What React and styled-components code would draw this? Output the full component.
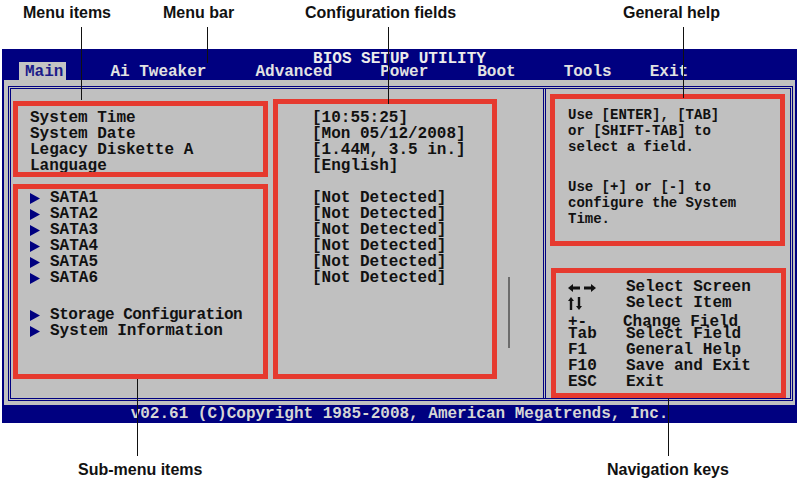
import React from "react";
import styled, { createGlobalStyle } from "styled-components";

const GlobalStyle = createGlobalStyle`
  body {
    margin: 0;
    background: #ffffff;
  }
`;

const Page = styled.div`
  position: relative;
  width: 797px;
  height: 483px;
  overflow: hidden;
  background: #ffffff;
`;

const TopLabels = styled.div`
  display: grid;
  grid-template-columns: 140px 142px 318px 1fr;
  height: 49px;
  box-sizing: border-box;
  padding: 3px 0 0 23px;
`;

const BottomLabels = styled.div`
  display: grid;
  grid-template-columns: 529px 1fr;
  height: 60px;
  box-sizing: border-box;
  padding: 37px 0 0 78px;
`;

const Callout = styled.div`
  font-family: "Liberation Sans", Arial, sans-serif;
  font-weight: 700;
  font-size: 16px;
  line-height: 20px;
  color: #111;
  white-space: nowrap;
`;

const Leader = styled.div`
  position: absolute;
  left: ${(p) => p.$x}px;
  top: ${(p) => p.$y}px;
  width: 1px;
  height: ${(p) => p.$h}px;
  background: #111;
  z-index: 3;
`;

const Bios = styled.div`
  margin-left: 2px;
  width: 795px;
  background: #000080;
  font-family: "Liberation Mono", "Courier New", monospace;
  font-weight: 700;
  font-size: 16px;
`;

const Header = styled.div`
  height: 31px;
  display: flex;
  flex-direction: column;
`;

const Title = styled.div`
  height: 13px;
  line-height: 21px;
  text-align: center;
  color: #ececec;
  white-space: pre;
`;

const MenuBar = styled.div`
  display: flex;
  height: 18px;
`;

const MenuItem = styled.div`
  margin-left: ${(p) => p.$ml}px;
  height: 18px;
  line-height: 21px;
  white-space: pre;
  color: ${(p) => (p.$active ? "#1c1c8a" : "#e2e2e2")};
  background: ${(p) => (p.$active ? "#c4c4c4" : "transparent")};
  padding: ${(p) => (p.$active ? "0 3px 0 6px" : "0")};
`;

const Body = styled.div`
  margin: 0 2px;
  height: 325px;
  box-sizing: border-box;
  background: #c0c0c0;
  padding: 6px 2px 4px 4px;
`;

const Frame = styled.div`
  height: 100%;
  box-sizing: border-box;
  border: 3px double #000080;
  display: grid;
  grid-template-columns: 532px 1fr;
`;

const LeftPane = styled.div`
  display: flex;
  padding: 10px 0 0 2px;
`;

const GroupColumn = styled.div`
  display: flex;
  flex-direction: column;
  width: 255px;
  padding-top: 2px;
`;

const Marked = styled.div`
  position: relative;
  box-sizing: border-box;
  width: ${(p) => p.$w}px;
  height: ${(p) => p.$h}px;
  margin: ${(p) => p.$m || "0"};
  padding: ${(p) => p.$pad};
  color: #111;

  &::after {
    content: "";
    position: absolute;
    inset: 0;
    border: 5px solid #e63a2f;
    pointer-events: none;
  }
`;

const Line = styled.div`
  height: 16px;
  line-height: 17px;
  white-space: pre;
  margin-top: ${(p) => p.$gap || 0}px;
`;

const SubRow = styled.div`
  display: flex;
  align-items: center;
  height: 16px;
  line-height: 17px;
  white-space: pre;
  margin-top: ${(p) => p.$gap || 0}px;
  letter-spacing: ${(p) => (p.$tight ? "-0.45px" : "0")};
`;

const Pointer = styled.svg`
  width: 10px;
  height: 11px;
  margin-right: 10px;
  flex-shrink: 0;
`;

const ScrollMark = styled.div`
  width: 2px;
  height: 71px;
  margin: 178px 0 0 11px;
  background: #6c6c6c;
`;

const RightPane = styled.div`
  border-left: 3px double #000080;
  display: flex;
  flex-direction: column;
  padding: 5px 0 0 4px;
`;

const HelpText = styled.div`
  font-size: 14px;
  line-height: 16px;
  white-space: pre;

  & + & {
    margin-top: 24px;
  }
`;

const NavRow = styled.div`
  display: grid;
  grid-template-columns: 58px 1fr;
  height: 16px;
  line-height: 17px;
  white-space: pre;
  padding-top: ${(p) => (p.$nudge ? 3 : 0)}px;
  margin-bottom: ${(p) => (p.$nudge ? -4 : 0)}px;
`;

const NavKey = styled.div`
  display: flex;
  align-items: center;
`;

const NavDesc = styled.div`
  margin-left: ${(p) => (p.$nudge ? -3 : 0)}px;
`;

const Footer = styled.div`
  height: 18px;
  line-height: 19px;
  text-align: center;
  color: #d6d6d6;
  white-space: pre;
`;

const Arrow = () => (
  <Pointer viewBox="0 0 10 11">
    <polygon points="0,0 10,5.5 0,11" fill="#000080" />
  </Pointer>
);

const LeftRight = () => (
  <svg width="28" height="10" viewBox="0 0 28 10">
    <path d="M0 5 L5 1 L5 3.5 L12 3.5 L12 6.5 L5 6.5 L5 9 Z" fill="#111" />
    <path d="M28 5 L23 1 L23 3.5 L16 3.5 L16 6.5 L23 6.5 L23 9 Z" fill="#111" />
  </svg>
);

const UpDown = () => (
  <svg width="14" height="13" viewBox="0 0 14 13">
    <path d="M3 0 L6 4 L4.2 4 L4.2 13 L1.8 13 L1.8 4 L0 4 Z" fill="#111" />
    <path d="M11 13 L14 9 L12.2 9 L12.2 0 L9.8 0 L9.8 9 L8 9 Z" fill="#111" />
  </svg>
);

const menus = [
  { label: "Main", ml: 17, active: true },
  { label: "Ai Tweaker", ml: 44 },
  { label: "Advanced", ml: 49 },
  { label: "Power", ml: 48 },
  { label: "Boot", ml: 49 },
  { label: "Tools", ml: 48 },
  { label: "Exit", ml: 38 },
];

const sata = ["SATA1", "SATA2", "SATA3", "SATA4", "SATA5", "SATA6"];

const keys = [
  { key: <LeftRight />, desc: "Select Screen" },
  { key: <UpDown />, desc: "Select Item" },
  { key: "+-", desc: "Change Field", nudge: true },
  { key: "Tab", desc: "Select Field" },
  { key: "F1", desc: "General Help" },
  { key: "F10", desc: "Save and Exit" },
  { key: "ESC", desc: "Exit" },
];

const App = () => {
  return (
    <>
      <GlobalStyle />
      <Page>
        <TopLabels>
          <Callout>Menu items</Callout>
          <Callout>Menu bar</Callout>
          <Callout>Configuration fields</Callout>
          <Callout>General help</Callout>
        </TopLabels>

        <Bios>
          <Header>
            <Title>BIOS SETUP UTILITY</Title>
            <MenuBar>
              {menus.map((m) => (
                <MenuItem key={m.label} $ml={m.ml} $active={m.active}>
                  {m.label}
                </MenuItem>
              ))}
            </MenuBar>
          </Header>

          <Body>
            <Frame>
              <LeftPane>
                <GroupColumn>
                  <Marked $w={255} $h={76} $pad="9px 0 0 17px">
                    <Line>System Time</Line>
                    <Line>System Date</Line>
                    <Line>Legacy Diskette A</Line>
                    <Line>Language</Line>
                  </Marked>
                  <Marked $w={255} $h={195} $m="7px 0 0 0" $pad="6px 0 0 17px">
                    {sata.map((s) => (
                      <SubRow key={s}>
                        <Arrow />
                        {s}
                      </SubRow>
                    ))}
                    <SubRow $gap={21} $tight>
                      <Arrow />
                      Storage Configuration
                    </SubRow>
                    <SubRow>
                      <Arrow />
                      System Information
                    </SubRow>
                  </Marked>
                </GroupColumn>

                <Marked $w={224} $h={280} $m="0 0 0 5px" $pad="11px 0 0 39px">
                  <Line>[10:55:25]</Line>
                  <Line>[Mon 05/12/2008]</Line>
                  <Line>[1.44M, 3.5 in.]</Line>
                  <Line>[English]</Line>
                  <Line $gap={16}>[Not Detected]</Line>
                  <Line>[Not Detected]</Line>
                  <Line>[Not Detected]</Line>
                  <Line>[Not Detected]</Line>
                  <Line>[Not Detected]</Line>
                  <Line>[Not Detected]</Line>
                </Marked>

                <ScrollMark />
              </LeftPane>

              <RightPane>
                <Marked $w={235} $h={152} $pad="13px 0 0 18px">
                  <HelpText>
                    {"Use [ENTER], [TAB]\nor [SHIFT-TAB] to\nselect a field."}
                  </HelpText>
                  <HelpText>
                    {"Use [+] or [-] to\nconfigure the System\nTime."}
                  </HelpText>
                </Marked>
                <Marked $w={235} $h={130} $m="22px 0 0 1px" $pad="11px 0 0 17px">
                  {keys.map((k) => (
                    <NavRow key={k.desc} $nudge={k.nudge}>
                      <NavKey>{k.key}</NavKey>
                      <NavDesc $nudge={k.nudge}>{k.desc}</NavDesc>
                    </NavRow>
                  ))}
                </Marked>
              </RightPane>
            </Frame>
          </Body>

          <Footer>v02.61 (C)Copyright 1985-2008, American Megatrends, Inc.</Footer>
        </Bios>

        <BottomLabels>
          <Callout>Sub-menu items</Callout>
          <Callout>Navigation keys</Callout>
        </BottomLabels>

        <Leader $x={81} $y={27} $h={73} />
        <Leader $x={207} $y={27} $h={36} />
        <Leader $x={388} $y={27} $h={77} />
        <Leader $x={683} $y={27} $h={71} />
        <Leader $x={137} $y={379} $h={77} />
        <Leader $x={668} $y={398} $h={58} />
      </Page>
    </>
  );
};

export default App;
